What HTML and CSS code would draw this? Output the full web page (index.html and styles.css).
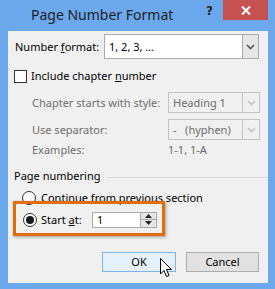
FILE: index.html
```html
<!DOCTYPE html>
<html>
<head>
<meta charset="utf-8">
<link rel="stylesheet" href="styles.css">
</head>
<body>
<div class="frame">
  <div class="titlebar">
    <div class="title">Page Number Format</div>
    <div class="help">?</div>
    <div class="close">
      <svg width="10" height="9" viewBox="0 0 10 9"><path d="M1 0.5 L9 8.5 M9 0.5 L1 8.5" stroke="#fff" stroke-width="2"/></svg>
    </div>
  </div>
  <div class="client">
    <div class="row row-format">
      <span class="label">Number <u>f</u>ormat:</span>
      <div class="combo">
        <span class="combo-text">1, 2, 3, …</span>
        <span class="combo-btn">
          <svg width="9" height="6" viewBox="0 0 9 6"><path d="M1 1 L4.5 4.5 L8 1" fill="none" stroke="#555" stroke-width="1.6"/></svg>
        </span>
      </div>
    </div>
    <div class="row row-check">
      <span class="checkbox"></span>
      <span class="label">Include chapter <u>n</u>umber</span>
    </div>
    <div class="row row-sub">
      <span class="label dis sublabel">Chapter starts with style:</span>
      <div class="combo combo-dis">
        <span class="combo-text">Heading 1</span>
        <span class="combo-btn">
          <svg width="9" height="6" viewBox="0 0 9 6"><path d="M1 1 L4.5 4.5 L8 1" fill="none" stroke="#c4c4c4" stroke-width="1.6"/></svg>
        </span>
      </div>
    </div>
    <div class="row row-sub">
      <span class="label dis sublabel">Use separator:</span>
      <div class="combo combo-dis">
        <span class="combo-text">-&nbsp;&nbsp;&nbsp;(hyphen)</span>
        <span class="combo-btn">
          <svg width="9" height="6" viewBox="0 0 9 6"><path d="M1 1 L4.5 4.5 L8 1" fill="none" stroke="#c4c4c4" stroke-width="1.6"/></svg>
        </span>
      </div>
    </div>
    <div class="row row-examples">
      <span class="label dis sublabel">Examples:</span>
      <span class="label dis">1-1, 1-A</span>
    </div>
    <div class="row row-group">
      <span class="label">Page numbering</span>
      <span class="group-line"></span>
    </div>
    <div class="row row-continue">
      <span class="radio"></span>
      <span class="label">Continue from previous section</span>
    </div>
    <div class="highlight">
      <span class="radio checked"><span class="dot"></span></span>
      <span class="label start-label">Start <u>a</u>t:</span>
      <div class="spin">
        <span class="spin-text">1</span>
        <span class="spin-btns">
          <span class="spin-btn"><svg width="7" height="4" viewBox="0 0 7 4"><path d="M0 4 L3.5 0 L7 4 Z" fill="#222"/></svg></span>
          <span class="spin-btn"><svg width="7" height="4" viewBox="0 0 7 4"><path d="M0 0 L3.5 4 L7 0 Z" fill="#222"/></svg></span>
        </span>
      </div>
    </div>
    <div class="buttons">
      <div class="btn btn-default">OK
        <svg class="cursor" width="13" height="20" viewBox="0 0 13 20"><path d="M0.5 0.5 L0.5 16 L4 12.5 L6.5 18.5 L9 17.5 L6.5 11.5 L11.5 11.5 Z" fill="#fff" stroke="#000" stroke-width="1" stroke-linejoin="miter"/></svg>
      </div>
      <div class="btn">Cancel</div>
    </div>
  </div>
</div>
</body>
</html>
```

FILE: styles.css
```css
* { box-sizing: border-box; }
html, body { margin: 0; padding: 0; }
body {
  width: 275px;
  height: 289px;
  overflow: hidden;
  font-family: "Noto Sans", "Open Sans", sans-serif;
  font-size: 11px;
  color: #000;
}
u { text-decoration: underline; text-underline-offset: 1px; }
.frame {
  width: 275px;
  height: 289px;
  background: #6ca8ec;
  padding: 0 7px 6px 8px;
  display: flex;
  flex-direction: column;
}
.titlebar {
  height: 31px;
  display: flex;
  align-items: flex-start;
  margin-right: -7px;
  margin-left: -8px;
}
.title {
  margin-left: 31px;
  margin-top: 5px;
  font-size: 14px;
  line-height: 20px;
  color: #1e1e1e;
  flex: 1;
}
.help {
  margin-top: 3px;
  width: 16px;
  margin-right: 1px;
  font-family: "DejaVu Sans", sans-serif;
  font-weight: bold;
  font-size: 12px;
  line-height: 16px;
  color: #222;
}
.close {
  width: 45px;
  height: 20px;
  margin-right: 7px;
  background: #c75050;
  display: flex;
  align-items: center;
  justify-content: center;
}
.client {
  flex: 1;
  background: #f0f0f0;
  display: flex;
  flex-direction: column;
}
.row {
  display: flex;
  align-items: center;
}
.label { white-space: nowrap; line-height: 16px; }
.dis { color: #6d6d6d; }
.row-format {
  margin-top: 3px;
  height: 25px;
  padding-left: 7px;
}
.row-format .label { width: 89px; }
.combo {
  display: flex;
  align-items: stretch;
  border: 1px solid #ababab;
  background: #fff;
}
.row-format .combo { width: 155px; height: 25px; }
.combo-text {
  flex: 1;
  padding-left: 4px;
  display: flex;
  align-items: center;
}
.combo-btn {
  width: 16px;
  background: #e6e6e6;
  border-left: 1px solid #ababab;
  display: flex;
  align-items: center;
  justify-content: center;
}
.row-check {
  margin-top: 7px;
  height: 20px;
  padding-left: 6px;
}
.checkbox {
  width: 13px;
  height: 13px;
  border: 1px solid #333;
  background: #fff;
  margin-right: 4px;
}
.row-sub {
  margin-top: 6px;
  height: 21px;
  padding-left: 24px;
}
.sublabel { width: 136px; }
.combo-dis {
  width: 92px;
  height: 21px;
  border-color: #c4c4c4;
  background: #f0f0f0;
  color: #6d6d6d;
}
.combo-dis .combo-btn {
  background: #f0f0f0;
  border-left-color: #c4c4c4;
  width: 17px;
}
.row-examples {
  margin-top: 1px;
  height: 18px;
  padding-left: 24px;
}
.row-group {
  margin-top: 9px;
  height: 16px;
  padding-left: 6px;
}
.group-line {
  flex: 1;
  height: 1px;
  background: #dcdcdc;
  margin-left: 7px;
  margin-top: 3px;
}
.row-continue {
  margin-top: 7px;
  height: 14px;
  padding-left: 14px;
}
.radio {
  width: 14px;
  height: 14px;
  border: 1px solid #333;
  border-radius: 50%;
  background: #fff;
  margin-right: 5px;
  display: flex;
  align-items: center;
  justify-content: center;
  flex: none;
}
.dot {
  width: 8px;
  height: 8px;
  border-radius: 50%;
  background: #1a1a1a;
}
.highlight {
  margin-top: -4px;
  margin-left: 5px;
  width: 152px;
  height: 35px;
  border: 3px solid #e36c0a;
  box-shadow: 1px 1px 3px rgba(0,0,0,0.35);
  display: flex;
  align-items: center;
  padding-left: 7px;
  padding-top: 2px;
}
.start-label { width: 51px; margin-left: -1px; }
.spin {
  width: 65px;
  height: 16px;
  border: 1px solid #ababab;
  background: #fff;
  display: flex;
}
.spin-text {
  flex: 1;
  padding-left: 4px;
  line-height: 14px;
}
.spin-btns {
  width: 16px;
  display: flex;
  flex-direction: column;
  border-left: 1px solid #ababab;
}
.spin-btn {
  flex: 1;
  background: #e6e6e6;
  display: flex;
  align-items: center;
  justify-content: center;
}
.spin-btn + .spin-btn { border-top: 1px solid #ababab; }
.buttons {
  margin-top: 16px;
  display: flex;
  justify-content: flex-end;
  gap: 10px;
  padding-right: 9px;
}
.btn {
  width: 73px;
  height: 20px;
  border: 1px solid #adadad;
  background: #e1e1e1;
  display: flex;
  align-items: center;
  justify-content: center;
  line-height: 16px;
}
.btn-default {
  width: 74px;
  border-color: #7eb4ea;
  background: #e5f1fb;
  position: relative;
}
.cursor {
  position: absolute;
  left: 57px;
  top: 5px;
}
```
